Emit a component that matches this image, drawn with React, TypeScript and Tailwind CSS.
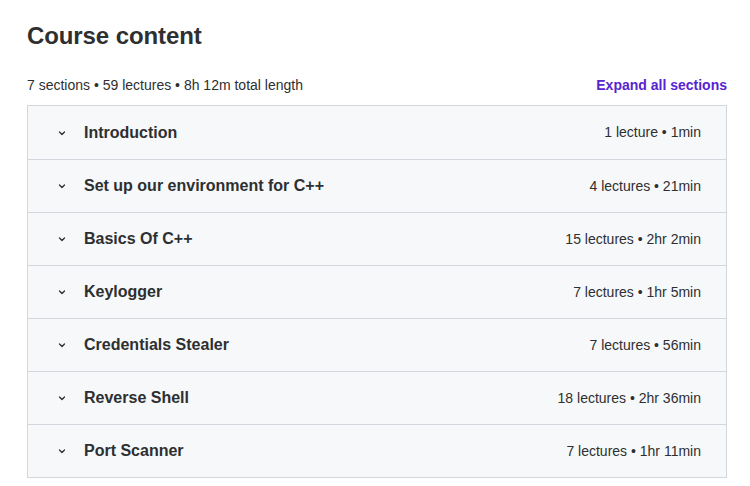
import React from 'react';

const sections = [
  { title: 'Introduction', meta: '1 lecture • 1min' },
  { title: 'Set up our environment for C++', meta: '4 lectures • 21min' },
  { title: 'Basics Of C++', meta: '15 lectures • 2hr 2min' },
  { title: 'Keylogger', meta: '7 lectures • 1hr 5min' },
  { title: 'Credentials Stealer', meta: '7 lectures • 56min' },
  { title: 'Reverse Shell', meta: '18 lectures • 2hr 36min' },
  { title: 'Port Scanner', meta: '7 lectures • 1hr 11min' },
];

const Chevron = () => (
  <svg width="10" height="10" viewBox="0 0 10 10" fill="none" className="text-[#2d2f31]">
    <path d="M2.5 4 L5 6.5 L7.5 4" stroke="currentColor" strokeWidth="1.3" strokeLinecap="round" strokeLinejoin="round" />
  </svg>
);

export default function App() {
  return (
    <div className="w-[750px] h-[486px] bg-white font-['Liberation_Sans',Arial,sans-serif] text-[#2d2f31]">
      <div className="pl-[27px] pr-[23px] pt-[21px]">
        <h2 className="text-[24px] font-bold leading-[30px] tracking-[-0.1px]">Course content</h2>

        <div className="flex items-center justify-between mt-[24px] h-[20px]">
          <span className="text-[14px]">7 sections • 59 lectures • 8h 12m total length</span>
          <button className="text-[14px] font-bold text-[#5624d0]">Expand all sections</button>
        </div>

        <div className="mt-[10px] border border-[#d1d7dc] bg-[#f7f8fa]">
          {sections.map((s, i) => (
            <div
              key={s.title}
              className={`flex items-center h-[53px] pl-[29px] pr-[25px] ${i > 0 ? 'border-t border-[#d1d7dc]' : ''}`}
            >
              <Chevron />
              <span className="ml-[17px] text-[16px] font-bold">{s.title}</span>
              <span className="ml-auto text-[14px]">{s.meta}</span>
            </div>
          ))}
        </div>
      </div>
    </div>
  );
}
